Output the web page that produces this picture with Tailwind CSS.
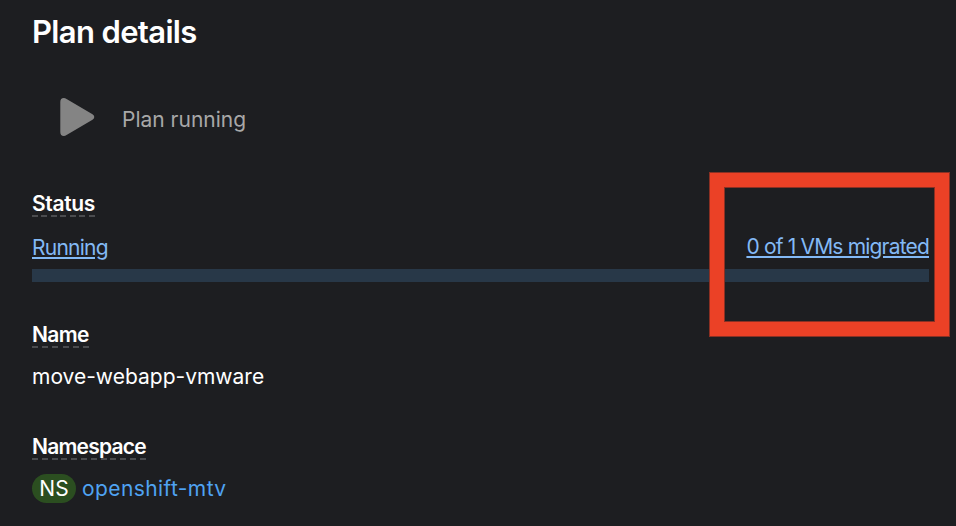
<!DOCTYPE html>
<html lang="en">
<head>
<meta charset="utf-8">
<title>Plan details</title>
<script src="https://cdn.jsdelivr.net/npm/@tailwindcss/browser@4"></script>
</head>
<body class="bg-[#1d1e21]">
<main class="relative h-[526px] w-[956px] overflow-hidden bg-[#1d1e21] pl-8 pr-[27px] pt-3 font-['Inter',sans-serif] text-[21px] text-white whitespace-nowrap">
  <h1 class="h-10 text-[31px] font-semibold leading-10 tracking-[-0.65px]">Plan details</h1>

  <div class="mt-[45px] flex h-11 items-center pl-7 text-[#a8a8a8]">
    <svg class="h-11 w-[35px] shrink-0" viewBox="0 0 35 44" fill="#848484"><path d="M0.3 5Q0.3 1 3.8 1Q5 1 7 2.2L32.5 17.3Q34.3 18.4 34.3 20Q34.3 21.6 32.5 22.7L7 37.8Q5 39 3.8 39Q0.3 39 0.3 35Z"/></svg>
    <span class="ml-[27px] pt-0.5">Plan running</span>
  </div>

  <dl>
    <dt class="mt-[47px] flex h-[29px]">
      <span class="h-full w-[63px] bg-[repeating-linear-gradient(90deg,#4b4c4f_0_6px,transparent_6px_9.5px)] bg-[length:100%_2px] bg-bottom bg-no-repeat font-semibold leading-[31px] tracking-[-0.35px]">Status</span>
    </dt>
    <dd class="mt-[15px]">
      <div class="flex h-[30px] justify-between leading-[32px] text-[#83b9f5]">
        <a class="underline decoration-2 underline-offset-[2px] tracking-[-0.75px]">Running</a>
        <a class="-mt-px underline decoration-2 underline-offset-[2px] tracking-[-0.82px]">0 of 1 VMs migrated</a>
      </div>
      <div class="mt-[7px] h-[13px] bg-[#283848]"></div>
    </dd>

    <dt class="mt-[37px] flex h-[29px]">
      <span class="h-full w-[57px] bg-[repeating-linear-gradient(90deg,#4b4c4f_0_6px,transparent_6px_10.2px)] bg-[length:100%_2px] bg-bottom bg-no-repeat font-semibold leading-[31px] tracking-[-0.6px]">Name</span>
    </dt>
    <dd class="mt-[14px] h-[30px] leading-[30px]">move-webapp-vmware</dd>

    <dt class="mt-[39px] flex h-[29px]">
      <span class="h-full w-[114px] bg-[repeating-linear-gradient(90deg,#4b4c4f_0_6px,transparent_6px_9.8px)] bg-[length:100%_2px] bg-bottom bg-no-repeat font-semibold leading-[31px] tracking-[-0.78px]">Namespace</span>
    </dt>
    <dd class="mt-[14px] flex h-[29px] items-center">
      <span class="flex h-[29px] w-11 items-center justify-center rounded-full bg-[#2b4e20]">NS</span>
      <a class="ml-1.5 tracking-[0.4px] text-[#4fa3f2]">openshift-mtv</a>
    </dd>
  </dl>

  <div class="absolute left-[710px] top-[173px] h-[163px] w-[239px] border-[14px] border-[#eb4126] shadow-[0_0_0_1px_#8a3023,inset_0_0_0_1px_#8a3023]"></div>
</main>
</body>
</html>
